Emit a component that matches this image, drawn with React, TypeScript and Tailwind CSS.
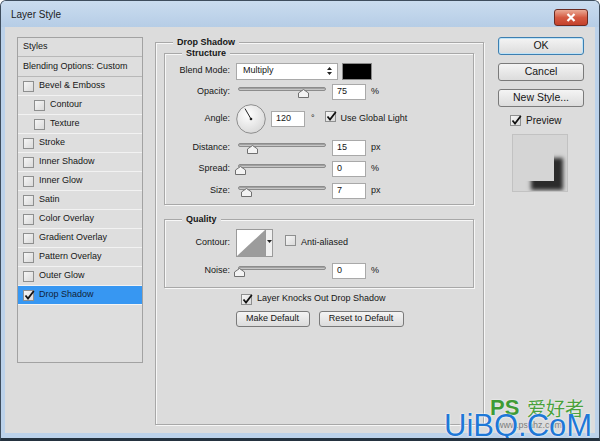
import React from 'react';

const styleRows = [
  { label: 'Bevel & Emboss' },
  { label: 'Contour', sub: true },
  { label: 'Texture', sub: true },
  { label: 'Stroke' },
  { label: 'Inner Shadow' },
  { label: 'Inner Glow' },
  { label: 'Satin' },
  { label: 'Color Overlay' },
  { label: 'Gradient Overlay' },
  { label: 'Pattern Overlay' },
  { label: 'Outer Glow' },
  { label: 'Drop Shadow', checked: true, selected: true },
];

function CheckBox({ checked = false }: { checked?: boolean }) {
  return (
    <span className="relative inline-flex h-[11px] w-[11px] shrink-0 border border-[#8e8f8f] bg-gradient-to-br from-[#f6f6f6] to-[#dadada]">
      {checked && (
        <svg className="absolute -left-[1px] -top-[2px]" width="13" height="13" viewBox="0 0 13 13">
          <path d="M2.5 6.5 L5 9.5 L10.8 2" stroke="#111" strokeWidth="1.8" fill="none" />
        </svg>
      )}
    </span>
  );
}

function Slider({ pos }: { pos: number }) {
  return (
    <div className="relative ml-[2px] w-[88px] self-stretch">
      <div className="mt-[4px] h-[4px] rounded-full border border-[#8c8c8c] bg-[#c6c6c6] shadow-[inset_0_1px_0_#a0a0a0]" />
      <svg className="absolute top-[6px]" style={{ left: pos - 5 }} width="11" height="9" viewBox="0 0 11 9">
        <path d="M5.5 0.5 L10.5 4 V8.5 H0.5 V4 Z" fill="#f3f3f3" stroke="#707070" />
      </svg>
    </div>
  );
}

function Field({ value, w = 'w-[34px]' }: { value: string; w?: string }) {
  return (
    <div className={`${w} flex h-[16px] items-center border border-[#a9a9a9] bg-white pl-[4px]`}>{value}</div>
  );
}

function Label({ children }: { children: React.ReactNode }) {
  return <div className="w-[66px] shrink-0 pr-[1px] text-right">{children}</div>;
}

function SliderRow({ label, pos, value, unit, mt }: { label: string; pos: number; value: string; unit: string; mt: string }) {
  return (
    <div className={`${mt} flex h-[18px] items-center`}>
      <Label>{label}</Label>
      <div className="ml-[5px] flex h-full items-center">
        <Slider pos={pos} />
        <div className="ml-[6px]">
          <Field value={value} />
        </div>
        <span className="ml-[5px]">{unit}</span>
      </div>
    </div>
  );
}

function Group({ title, className, children }: { title: string; className: string; children: React.ReactNode }) {
  return (
    <div className={`relative border border-[#a8a8a8] shadow-[inset_1px_1px_0_#f7f7f7,1px_1px_0_#f7f7f7] ${className}`}>
      <span className="absolute -top-[7px] left-[17px] bg-[#dcdcdc] px-[4px] font-bold leading-[12px]">{title}</span>
      {children}
    </div>
  );
}

function Button({ children, className = '', primary = false }: { children: React.ReactNode; className?: string; primary?: boolean }) {
  return (
    <div
      className={`flex items-center justify-center rounded-[3px] border bg-gradient-to-b from-[#f4f4f4] to-[#dcdcdc] ${
        primary ? 'border-[#3c7fb1] shadow-[inset_0_0_0_1px_#bfe3f7]' : 'border-[#7a7a7a]'
      } ${className}`}
    >
      {children}
    </div>
  );
}

export default function App() {
  return (
    <div className="relative flex h-[441px] w-[600px] flex-col overflow-hidden rounded-t-[6px] border-x border-t border-b-[3px] border-[#3e4d5d] border-b-[#24323f] bg-[#bcd2ea] font-['Liberation_Sans',Arial,sans-serif] text-[9px] text-[#161616]">
      {/* title bar */}
      <div className="flex h-[26px] shrink-0 items-start justify-between bg-gradient-to-b from-[#cadcef] to-[#b6cde6] pl-[10px] pr-[11px]">
        <span className="mt-[8px] text-[10px] leading-[12px] text-[#1c1c1c]">Layer Style</span>
        <div className="mt-[8px] flex h-[17px] w-[34px] items-center justify-center rounded-[3px] border border-[#6b2b22] bg-gradient-to-b from-[#e9a995] via-[#d45a42] to-[#c4412b]">
          <svg width="10" height="9" viewBox="0 0 10 9">
            <path d="M1.5 1 L8.5 8 M8.5 1 L1.5 8" stroke="#fff" strokeWidth="2.2" />
          </svg>
        </div>
      </div>

      {/* dialog body */}
      <div className="mx-[4px] mb-[5px] flex flex-1 bg-[#dcdcdc] pl-[12px] pt-[10px]">
        {/* styles list */}
        <div className="flex h-[326px] w-[126px] shrink-0 flex-col border border-[#a2a2a2] bg-[#dedede]">
          <div className="flex h-[19px] items-center border-b border-[#b8b8b8] pl-[5px]">Styles</div>
          <div className="flex h-[20px] items-center border-b border-[#b8b8b8] pl-[5px]">Blending Options: Custom</div>
          {styleRows.map((r) => (
            <div
              key={r.label}
              className={`flex h-[19px] items-center border-b ${
                r.selected ? 'border-[#f4f4f4] bg-[#3797f2] text-[#10233a]' : 'border-[#f2f2f2]'
              } ${r.sub ? 'pl-[16px]' : 'pl-[5px]'}`}
            >
              <CheckBox checked={r.checked} />
              <span className="ml-[5px]">{r.label}</span>
            </div>
          ))}
        </div>

        {/* drop shadow panel */}
        <Group title="Drop Shadow" className="ml-[12px] mt-[5px] h-[383px] w-[329px] shrink-0">
          <Group title="Structure" className="ml-[8px] mt-[10px] h-[152px] w-[310px] pt-[8px]">
            <div className="flex h-[18px] items-center">
              <Label>Blend Mode:</Label>
              <div className="ml-[5px] flex h-[17px] w-[102px] items-center justify-between border border-[#a9a9a9] bg-white pl-[6px] pr-[5px]">
                <span>Multiply</span>
                <svg width="5" height="8" viewBox="0 0 5 8">
                  <path d="M2.5 0 L5 3 H0 Z M2.5 8 L5 5 H0 Z" fill="#222" />
                </svg>
              </div>
              <div className="ml-[4px] h-[17px] w-[30px] border border-[#8a8a8a] bg-black" />
            </div>
            <SliderRow label="Opacity:" pos={65} value="75" unit="%" mt="mt-[3px]" />
            <div className="mt-[2px] flex h-[32px] items-center">
              <Label>Angle:</Label>
              <svg className="ml-[5px]" width="30" height="30" viewBox="0 0 30 30">
                <defs>
                  <radialGradient id="dial" cx="40%" cy="35%" r="70%">
                    <stop offset="0%" stopColor="#ffffff" />
                    <stop offset="100%" stopColor="#d8d8d8" />
                  </radialGradient>
                </defs>
                <circle cx="15" cy="15" r="14.3" fill="url(#dial)" stroke="#8e8e8e" />
                <path d="M15 15 L9 4.6" stroke="#222" strokeWidth="1" />
                <circle cx="15" cy="15" r="1.3" fill="#222" />
              </svg>
              <div className="ml-[5px]">
                <Field value="120" />
              </div>
              <span className="ml-[6px]">°</span>
              <span className="ml-[10px]">
                <CheckBox checked />
              </span>
              <span className="ml-[5px]">Use Global Light</span>
            </div>
            <SliderRow label="Distance:" pos={14} value="15" unit="px" mt="mt-[4px]" />
            <SliderRow label="Spread:" pos={2} value="0" unit="%" mt="mt-[3px]" />
            <SliderRow label="Size:" pos={8} value="7" unit="px" mt="mt-[4px]" />
          </Group>

          <Group title="Quality" className="ml-[8px] mt-[14px] h-[69px] w-[310px] pt-[9px]">
            <div className="flex h-[28px] items-center">
              <Label>Contour:</Label>
              <div className="ml-[5px] flex h-[28px] border border-[#9a9a9a] bg-white">
                <svg width="28" height="26" viewBox="0 0 28 26">
                  <path d="M0 26 L28 0 V26 Z" fill="#9c9c9c" />
                </svg>
                <div className="flex w-[7px] items-start justify-center border-l border-[#9a9a9a] bg-[#f0f0f0] pt-[10px]">
                  <svg width="5" height="3" viewBox="0 0 5 3">
                    <path d="M0 0 H5 L2.5 3 Z" fill="#222" />
                  </svg>
                </div>
              </div>
              <span className="ml-[12px]">
                <CheckBox />
              </span>
              <span className="ml-[5px]">Anti-aliased</span>
            </div>
            <SliderRow label="Noise:" pos={1} value="0" unit="%" mt="mt-[5px]" />
          </Group>

          <div className="mt-[4px] flex h-[14px] items-center pl-[85px]">
            <CheckBox checked />
            <span className="ml-[5px]">Layer Knocks Out Drop Shadow</span>
          </div>
          <div className="mt-[5px] flex justify-center gap-[9px]">
            <Button className="h-[16px] w-[74px]">Make Default</Button>
            <Button className="h-[16px] w-[85px]">Reset to Default</Button>
          </div>
        </Group>

        {/* right column */}
        <div className="ml-[14px] flex w-[86px] shrink-0 flex-col text-[10.5px]">
          <Button primary className="h-[18px]">OK</Button>
          <Button className="mt-[8px] h-[18px]">Cancel</Button>
          <Button className="mt-[8px] h-[18px]">New Style...</Button>
          <div className="mt-[7px] flex h-[13px] items-center pl-[12px] text-[10px]">
            <CheckBox checked />
            <span className="ml-[5px]">Preview</span>
          </div>
          <div className="relative ml-[14px] mt-[7px] h-[58px] w-[56px] overflow-hidden border border-[#c2c2c2] bg-[#d5d5d5]">
            <div className="absolute left-[9px] top-[14px] h-[32px] w-[32px] bg-[#d5d5d5] shadow-[9px_9px_4px_rgba(0,0,0,0.8)]" />
          </div>
        </div>
      </div>

      {/* watermark */}
      <span className="absolute left-[496px] top-[418px] text-[9px] text-[#7d7d7d]">www.psahz.com</span>
      <span className="absolute left-[489px] top-[396px] text-[22px] font-bold leading-none text-[#3f9b36] [text-shadow:0_0_2px_#fff]">PS</span>
      <span className="absolute left-[526px] top-[397px] font-['Noto_Sans_CJK_SC',sans-serif] text-[19px] leading-none text-[#4aa13c] [text-shadow:0_0_2px_#fff]">爱好者</span>
      <span className="absolute left-[443px] top-[409px] text-[31px] leading-none text-[#1f78d6] [text-shadow:0_0_2px_#fff,0_0_1px_#fff]">UiBQ.CoM</span>
    </div>
  );
}
